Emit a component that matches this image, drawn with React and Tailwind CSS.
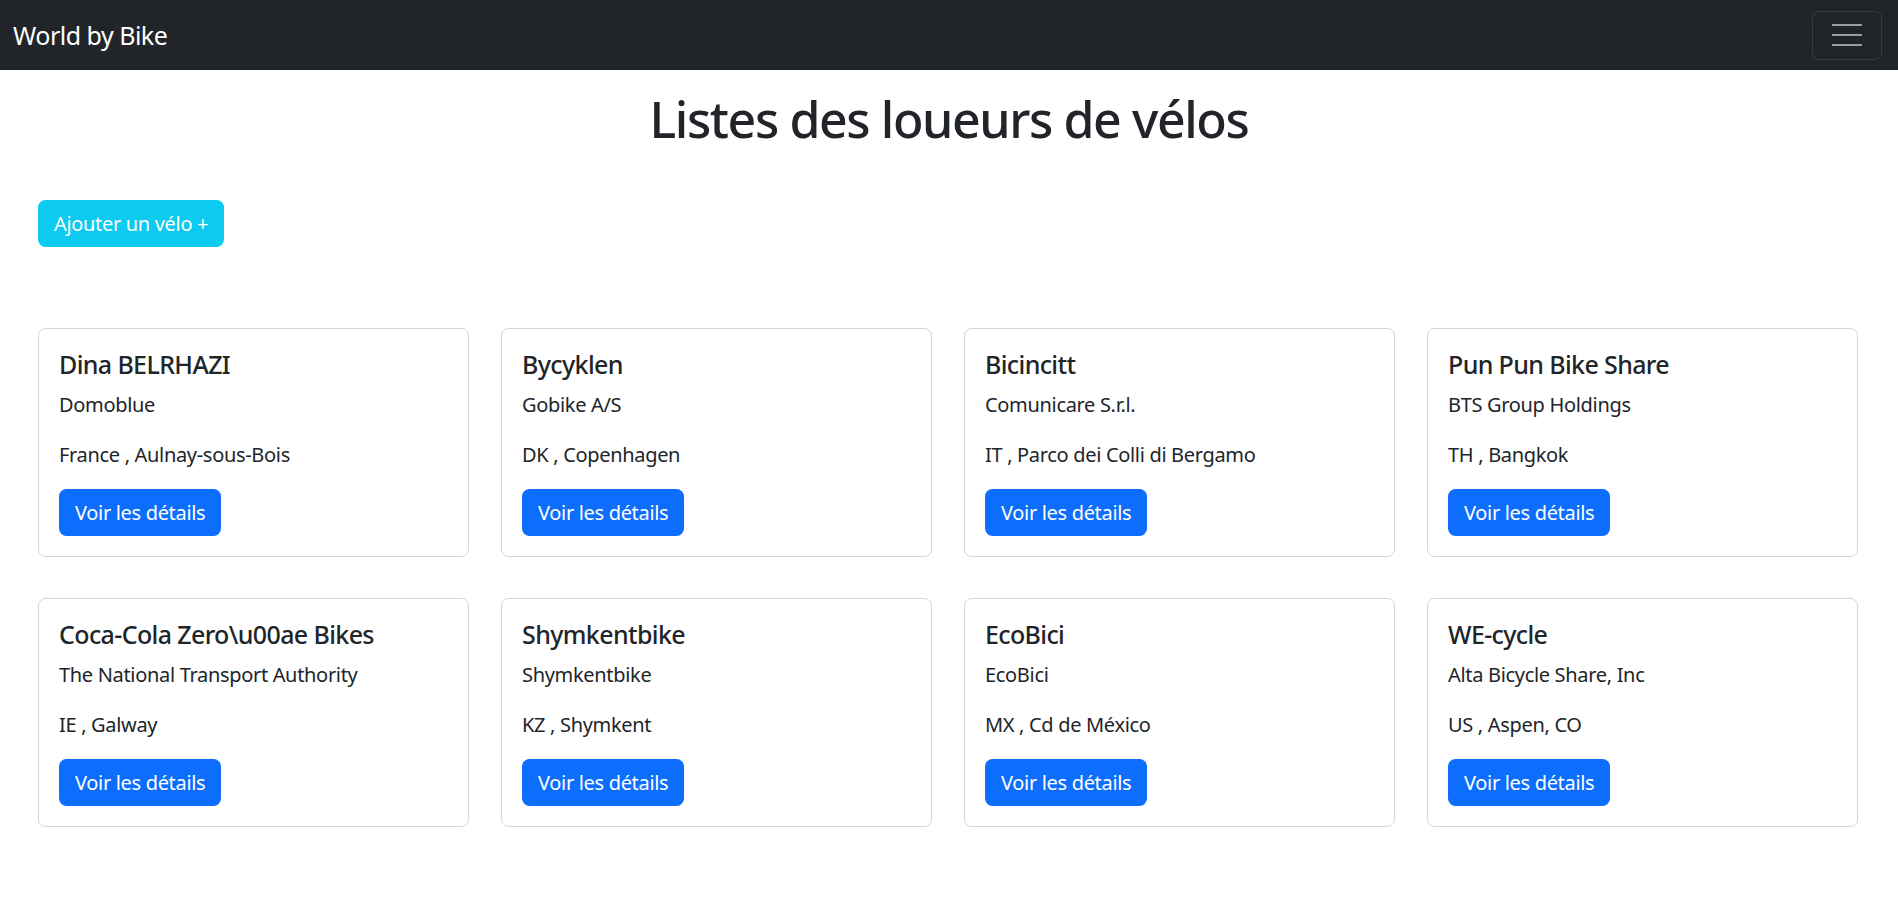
const loueurs = [
  { name: "Dina BELRHAZI", company: "Domoblue", country: "France", city: "Aulnay-sous-Bois" },
  { name: "Bycyklen", company: "Gobike A/S", country: "DK", city: "Copenhagen" },
  { name: "Bicincitt", company: "Comunicare S.r.l.", country: "IT", city: "Parco dei Colli di Bergamo" },
  { name: "Pun Pun Bike Share", company: "BTS Group Holdings", country: "TH", city: "Bangkok" },
  { name: "Coca-Cola Zero\\u00ae Bikes", company: "The National Transport Authority", country: "IE", city: "Galway" },
  { name: "Shymkentbike", company: "Shymkentbike", country: "KZ", city: "Shymkent" },
  { name: "EcoBici", company: "EcoBici", country: "MX", city: "Cd de México" },
  { name: "WE-cycle", company: "Alta Bicycle Share, Inc", country: "US", city: "Aspen, CO" },
];

function Navbar() {
  return (
    <nav className="h-[70px] bg-[#212529] flex items-center justify-between pl-[13px] pr-[16px]">
      <a href="#" className="text-[25px] leading-[37px] text-white tracking-[-0.02em]">
        World by Bike
      </a>
      <button className="w-[70px] h-[49px] border border-white/10 rounded-[7px] flex flex-col items-center justify-center gap-[8px]">
        <span className="block w-[30px] h-[2px] bg-white/55" />
        <span className="block w-[30px] h-[2px] bg-white/55" />
        <span className="block w-[30px] h-[2px] bg-white/55" />
      </button>
    </nav>
  );
}

function LoueurCard({ loueur }) {
  return (
    <div className="border border-[#d3d3d3] rounded-[7.5px] bg-white p-[20px]">
      <h5 className="text-[25px] leading-[30px] font-medium text-[#212529] mb-[10px] tracking-[-0.025em]">
        {loueur.name}
      </h5>
      <h6 className="text-[20px] leading-[30px] text-[#212529] pt-[1px] -mb-[1px]">{loueur.company}</h6>
      <p className="text-[20px] leading-[30px] text-[#212529] mt-[20px] mb-[19px] pt-[1px]">
        {loueur.country} , {loueur.city}
      </p>
      <button className="h-[47px] px-[16px] rounded-[7.5px] bg-[#0d6efd] text-white text-[20px] leading-[30px]">
        Voir les détails
      </button>
    </div>
  );
}

export default function App() {
  return (
    <div className="min-h-screen bg-white font-['Noto_Sans',sans-serif] tracking-[-0.02em]">
      <Navbar />
      <main>
        <h1 className="mt-[19px] text-center text-[50px] leading-[60px] font-medium text-[#212529] tracking-[-0.028em]">
          Listes des loueurs de vélos
        </h1>
        <div className="px-[38px] mt-[51px]">
          <button className="h-[47px] px-[16px] rounded-[7.5px] bg-[#0dcaf0] text-white text-[20px] leading-[30px]">
            Ajouter un vélo +
          </button>
        </div>
        <div className="grid grid-cols-4 gap-x-[32px] gap-y-[41px] pl-[38px] pr-[40px] mt-[81px] pb-[40px]">
          {loueurs.map((l) => (
            <LoueurCard key={l.name} loueur={l} />
          ))}
        </div>
      </main>
    </div>
  );
}
